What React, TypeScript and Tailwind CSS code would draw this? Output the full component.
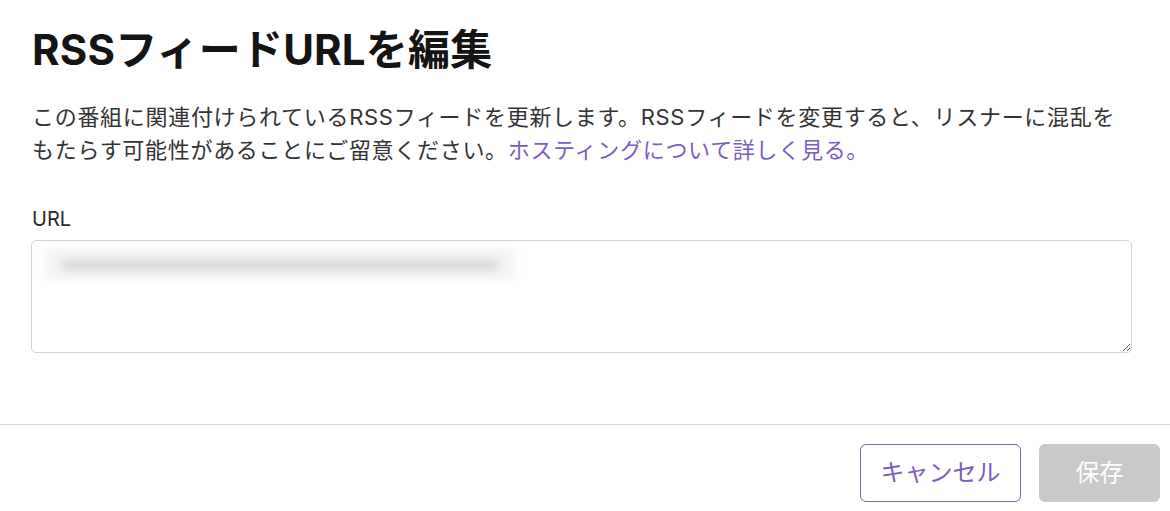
export default function App() {
  const font = { fontFamily: '"Inter", "Noto Sans CJK JP", sans-serif' };

  return (
    <div className="flex h-[511px] w-[1170px] flex-col overflow-hidden bg-white" style={font}>
      <div className="pl-[32px] pr-[38px] pt-[25px]">
        <h1 className="text-[42px] font-bold leading-[50px] tracking-[0.2px] text-[#141414]">
          RSSフィードURLを編集
        </h1>

        <p className="mt-[26px] text-[22px] leading-[33px] tracking-[0.7px] text-[#333333]">
          この番組に関連付けられているRSSフィードを更新します。RSSフィードを変更すると、リスナーに混乱を
          <br />
          もたらす可能性があることにご留意ください。
          <a href="#" className="text-[#7c5cc4]">
            ホスティングについて詳しく見る。
          </a>
        </p>

        <label className="mt-[38px] block text-[20px] leading-[28px] text-[#2a2a2a]">URL</label>

        {/* blurred url sits over the empty textarea */}
        <div className="relative -ml-px mt-[7px]">
          <textarea
            readOnly
            className="block h-[113px] w-full rounded-[5px] border border-[#d4d4d4] bg-white outline-none"
          />
          <div className="pointer-events-none absolute left-[14px] top-[8px] h-[32px] w-[470px] bg-[#f4f4f4] blur-[4px]">
            <div className="mx-[16px] mt-[12px] h-[10px] rounded-full bg-[#d6d6d6]" />
          </div>
        </div>
      </div>

      <div className="mt-[71px] border-t border-[#d8d8d8]" />

      <div className="flex justify-end gap-[18px] pr-[10px] pt-[19px]">
        <button className="h-[58px] w-[161px] rounded-[6px] border border-[#7d63b0] bg-white text-[24px] text-[#7c5cc4]">
          キャンセル
        </button>
        <button className="h-[58px] w-[121px] rounded-[6px] bg-[#c9c9c9] text-[24px] text-white">
          保存
        </button>
      </div>
    </div>
  );
}
